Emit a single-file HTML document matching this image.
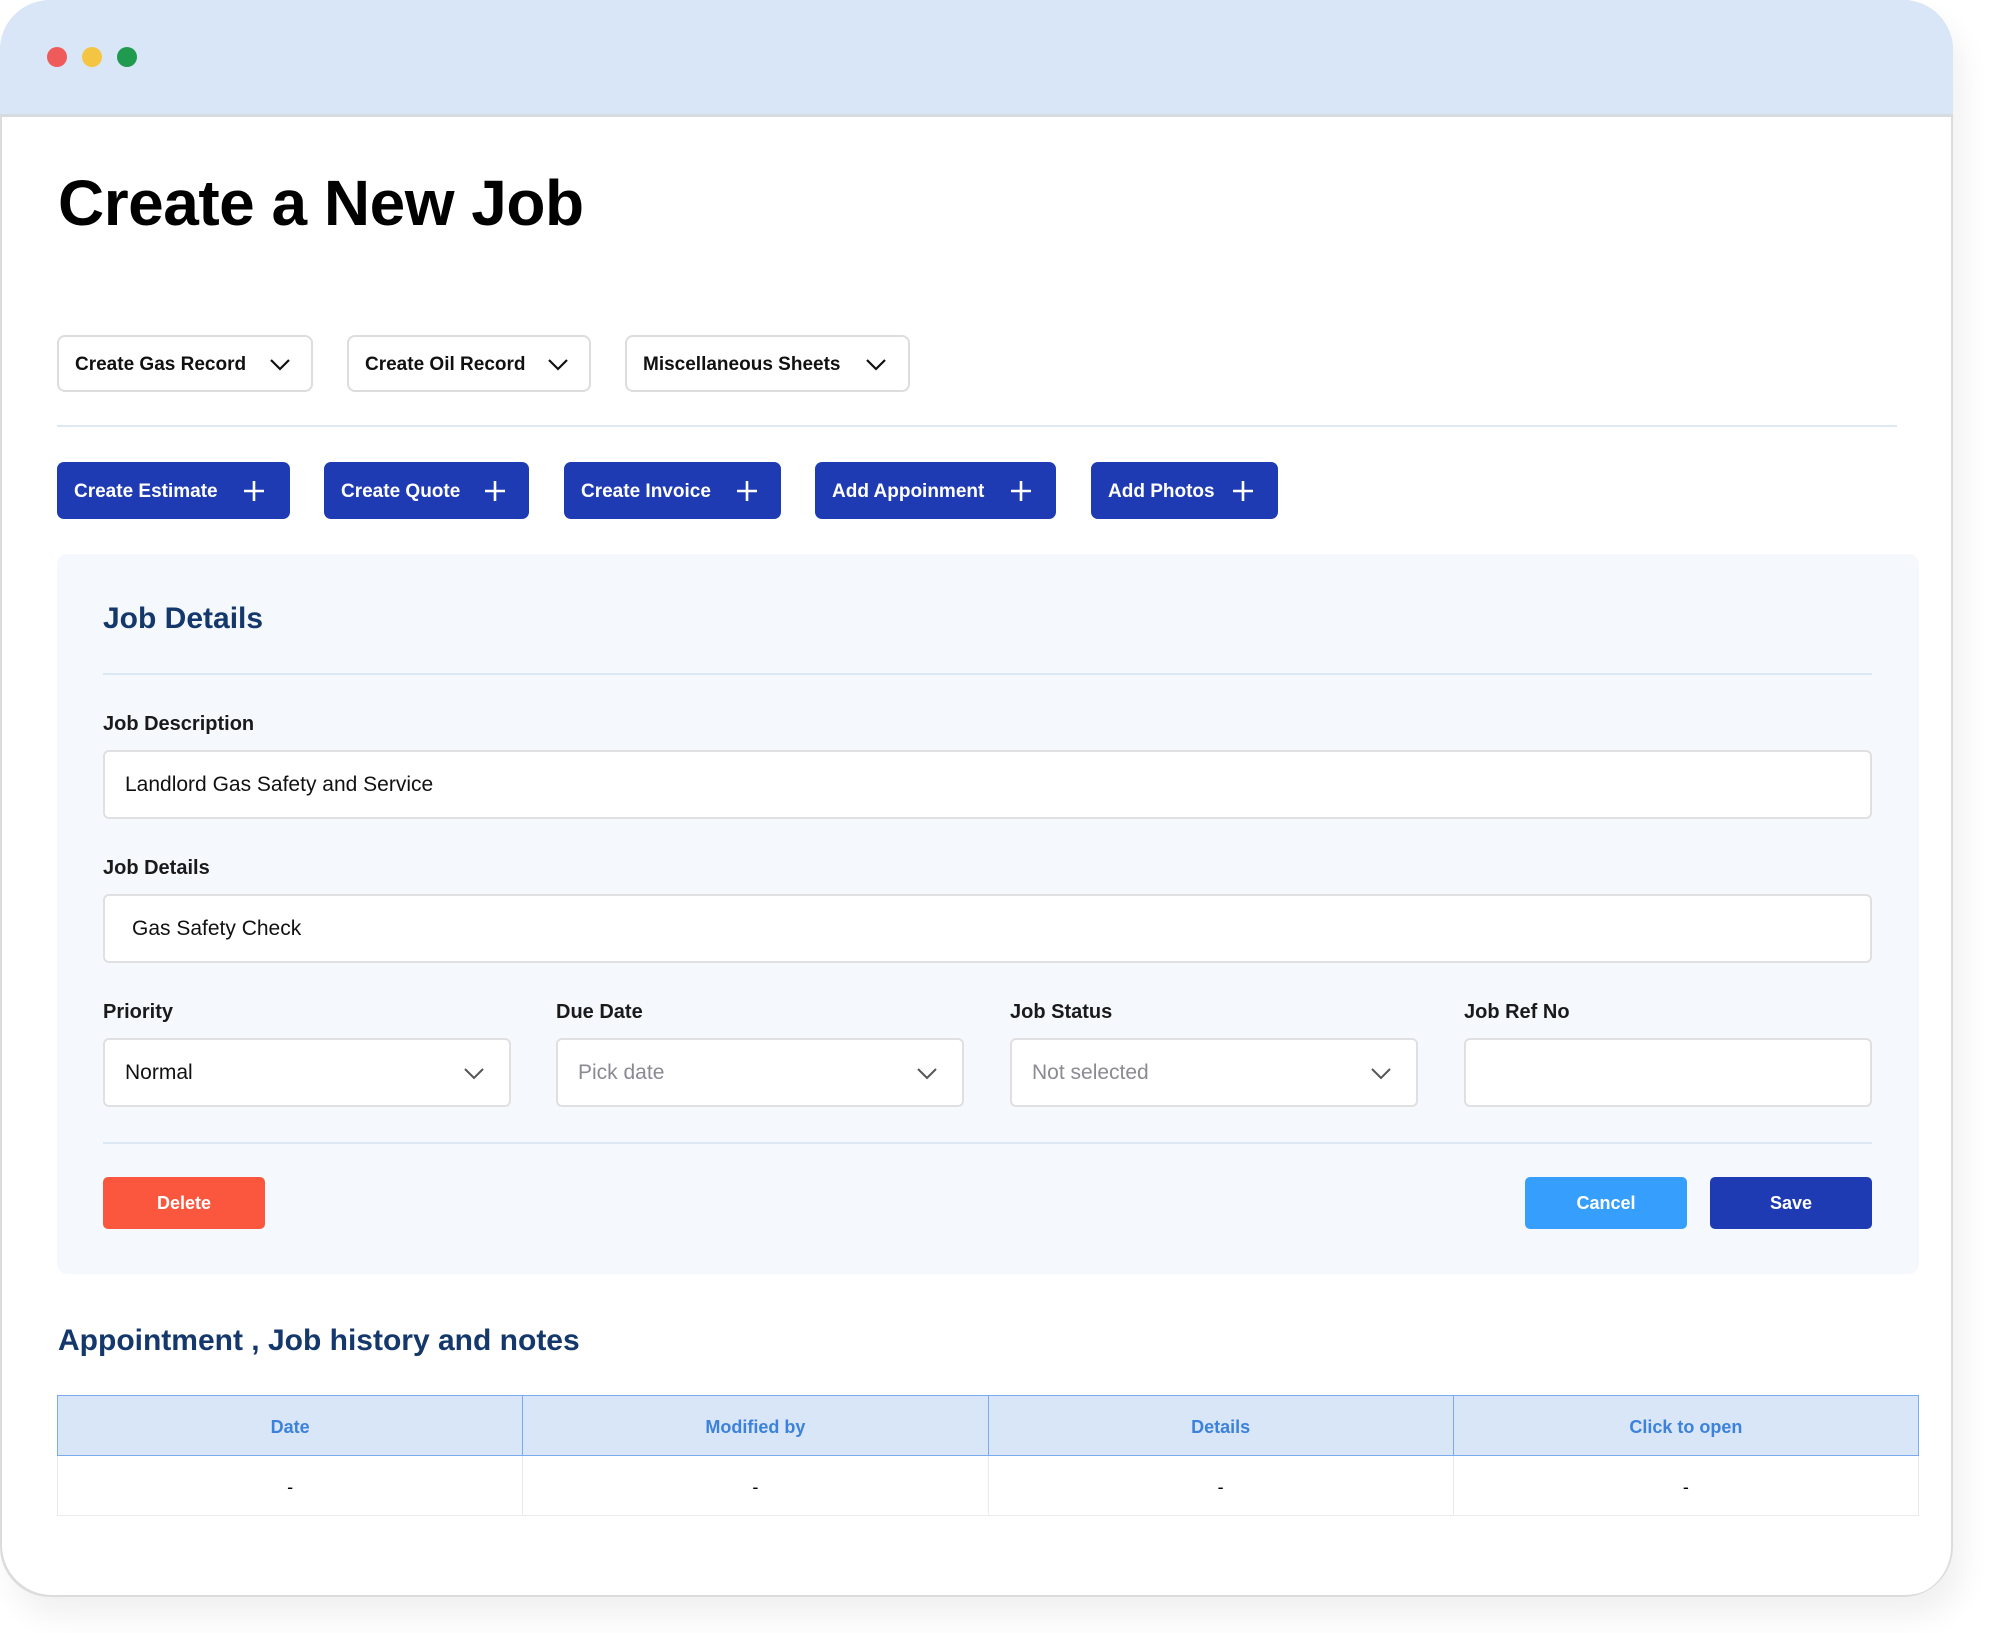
<!DOCTYPE html>
<html><head><meta charset="utf-8"><style>
*{box-sizing:border-box;margin:0;padding:0}
body{width:2000px;height:1633px;background:#fff;font-family:"Liberation Sans",sans-serif;position:relative;overflow:hidden}
.win{position:absolute;left:0;top:0;width:1953px;height:1597px;border-radius:50px;background:#fff;box-shadow:inset 2px -2px 0 #dcdcdc,inset -2px 0 0 #dcdcdc,10px 20px 30px rgba(0,0,0,.06);overflow:hidden}
.bar{position:absolute;left:0;top:0;width:100%;height:117px;background:#d8e6f7;border-bottom:3px solid #d7dbe0}
.dot{position:absolute;top:47px;width:20px;height:20px;border-radius:50%}
.a{position:absolute}
h1{position:absolute;left:58px;top:166px;font-size:64px;font-weight:700;color:#000;letter-spacing:-0.5px}
.dd{position:absolute;top:335px;height:57px;border:2px solid #ddd;border-radius:8px;font-size:19px;font-weight:700;color:#111;padding-left:16px;line-height:55px}
.dd svg,.sel svg{position:absolute;top:50%;margin-top:-8px}
.bb{position:absolute;top:462px;height:57px;background:#1f3bb3;border-radius:7px;color:#fff;font-size:19px;font-weight:700;padding-left:17px;line-height:59px}
.bb svg{position:absolute;top:18px}
.panel{position:absolute;left:57px;top:554px;width:1862px;height:720px;background:#f5f8fc;border-radius:10px}
.lbl{position:absolute;font-size:20px;font-weight:700;color:#1a1a1a}
.inp{position:absolute;height:69px;background:#fff;border:2px solid #e0e0e2;border-radius:6px;font-size:21px;color:#111;line-height:65px;padding-left:20px}
.line{position:absolute;height:2px;background:#dde8f5}
.btn{position:absolute;top:1177px;height:52px;border-radius:5px;color:#fff;font-size:18px;font-weight:700;text-align:center;line-height:52px}
table{position:absolute;left:57px;top:1395px;width:1862px;border-collapse:collapse}
th{height:60px;background:#d8e6f7;color:#3c82dc;font-size:18px;font-weight:700;border:1.5px solid #7aaaf0;width:25%;padding-top:3px}
td{height:60px;text-align:center;border:1.5px solid #ebebeb;font-size:18px;padding-top:3px}
</style></head><body>
<div class="win">
<div class="bar"></div>
<div class="dot" style="left:47px;background:#ef5a5a"></div>
<div class="dot" style="left:82px;background:#f4c542"></div>
<div class="dot" style="left:117px;background:#1f9a4e"></div>
<h1>Create a New Job</h1>

<div class="dd" style="left:57px;width:256px">Create Gas Record<svg style="left:210px" width="22" height="16" viewBox="0 0 22 16"><path d="M2 4l9 9 9-9" fill="none" stroke="#111" stroke-width="2.2"/></svg></div>
<div class="dd" style="left:347px;width:244px">Create Oil Record<svg style="left:198px" width="22" height="16" viewBox="0 0 22 16"><path d="M2 4l9 9 9-9" fill="none" stroke="#111" stroke-width="2.2"/></svg></div>
<div class="dd" style="left:625px;width:285px">Miscellaneous Sheets<svg style="left:238px" width="22" height="16" viewBox="0 0 22 16"><path d="M2 4l9 9 9-9" fill="none" stroke="#111" stroke-width="2.2"/></svg></div>
<div class="line" style="left:57px;top:425px;width:1840px"></div>

<div class="bb" style="left:57px;width:233px">Create Estimate<svg style="left:186px" width="22" height="22"><path d="M11 1v20M1 11h20" stroke="#fff" stroke-width="2.6"/></svg></div>
<div class="bb" style="left:324px;width:205px">Create Quote<svg style="left:160px" width="22" height="22"><path d="M11 1v20M1 11h20" stroke="#fff" stroke-width="2.6"/></svg></div>
<div class="bb" style="left:564px;width:217px">Create Invoice<svg style="left:172px" width="22" height="22"><path d="M11 1v20M1 11h20" stroke="#fff" stroke-width="2.6"/></svg></div>
<div class="bb" style="left:815px;width:241px">Add Appoinment<svg style="left:195px" width="22" height="22"><path d="M11 1v20M1 11h20" stroke="#fff" stroke-width="2.6"/></svg></div>
<div class="bb" style="left:1091px;width:187px">Add Photos<svg style="left:141px" width="22" height="22"><path d="M11 1v20M1 11h20" stroke="#fff" stroke-width="2.6"/></svg></div>

<div class="panel"></div>
<div class="a" style="left:103px;top:602px;font-size:30px;font-weight:700;color:#14386b">Job Details</div>
<div class="line" style="left:103px;top:673px;width:1769px"></div>
<div class="lbl" style="left:103px;top:713px">Job Description</div>
<div class="inp" style="left:103px;top:750px;width:1769px">Landlord Gas Safety and Service</div>
<div class="lbl" style="left:103px;top:857px">Job Details</div>
<div class="inp" style="left:103px;top:894px;width:1769px;padding-left:27px">Gas Safety Check</div>
<div class="lbl" style="left:103px;top:1001px">Priority</div>
<div class="lbl" style="left:556px;top:1001px">Due Date</div>
<div class="lbl" style="left:1010px;top:1001px">Job Status</div>
<div class="lbl" style="left:1464px;top:1001px">Job Ref No</div>
<div class="inp sel" style="left:103px;top:1038px;width:408px">Normal<svg style="left:358px" width="22" height="16" viewBox="0 0 22 16"><path d="M2 4l9 9 9-9" fill="none" stroke="#555" stroke-width="2"/></svg></div>
<div class="inp sel" style="left:556px;top:1038px;width:408px;color:#8a8a92">Pick date<svg style="left:358px" width="22" height="16" viewBox="0 0 22 16"><path d="M2 4l9 9 9-9" fill="none" stroke="#555" stroke-width="2"/></svg></div>
<div class="inp sel" style="left:1010px;top:1038px;width:408px;color:#8a8a92">Not selected<svg style="left:358px" width="22" height="16" viewBox="0 0 22 16"><path d="M2 4l9 9 9-9" fill="none" stroke="#555" stroke-width="2"/></svg></div>
<div class="inp" style="left:1464px;top:1038px;width:408px"></div>
<div class="line" style="left:103px;top:1142px;width:1769px"></div>
<div class="btn" style="left:103px;width:162px;background:#fa573e">Delete</div>
<div class="btn" style="left:1525px;width:162px;background:#369ffd">Cancel</div>
<div class="btn" style="left:1710px;width:162px;background:#1f3bb3">Save</div>

<div class="a" style="left:58px;top:1324px;font-size:30px;font-weight:700;color:#14386b">Appointment , Job history and notes</div>
<table><tr><th>Date</th><th>Modified by</th><th>Details</th><th>Click to open</th></tr>
<tr><td>-</td><td>-</td><td>-</td><td>-</td></tr></table>
</div>
</body></html>
